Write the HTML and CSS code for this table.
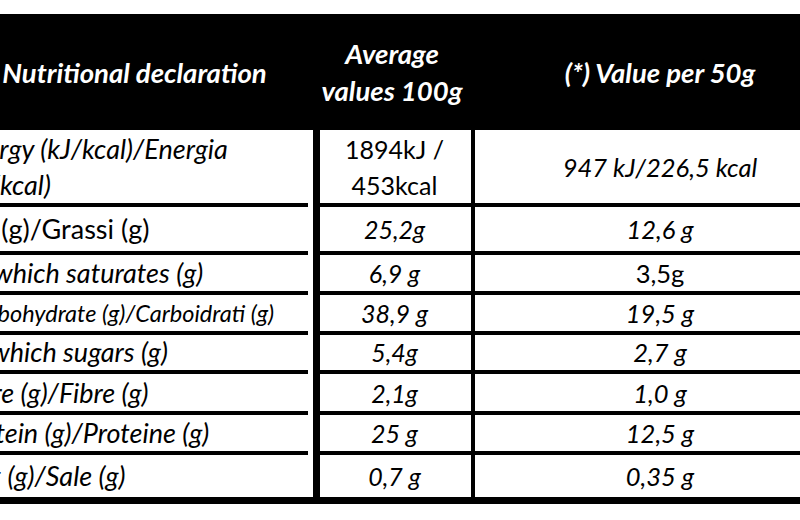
FILE: index.html
```html
<!DOCTYPE html>
<html lang="en">
<head>
<meta charset="utf-8">
<title>Nutritional declaration</title>
<link rel="stylesheet" href="styles.css">
</head>
<body>
<div class="sheet">
  <div class="table">
    <div class="head">
      <div class="hc hc1">Nutritional declaration</div>
      <div class="hc hc2">Average<br>values 100g</div>
      <div class="hc hc3">(*) Value per 50g</div>
    </div>

    <div class="row r1">
      <div class="cell c1 it two">Energy (kJ/kcal)/Energia<br>(kJ/kcal)</div>
      <div class="cell c2 two">1894kJ /<br>453kcal</div>
      <div class="cell c3 it">947 kJ/226,5 kcal</div>
    </div>

    <div class="row r2">
      <div class="cell c1">Fat (g)/Grassi (g)</div>
      <div class="cell c2 it">25,2g</div>
      <div class="cell c3 it">12,6 g</div>
    </div>

    <div class="row r3">
      <div class="cell c1 it sub">of which saturates (g)</div>
      <div class="cell c2 it">6,9 g</div>
      <div class="cell c3">3,5g</div>
    </div>

    <div class="row r4">
      <div class="cell c1 it small">Carbohydrate (g)/Carboidrati (g)</div>
      <div class="cell c2 it">38,9 g</div>
      <div class="cell c3 it">19,5 g</div>
    </div>

    <div class="row r5">
      <div class="cell c1 it sub sub2">of which sugars (g)</div>
      <div class="cell c2 it">5,4g</div>
      <div class="cell c3 it">2,7 g</div>
    </div>

    <div class="row r6">
      <div class="cell c1 it">Fibre (g)/Fibre (g)</div>
      <div class="cell c2 it">2,1g</div>
      <div class="cell c3 it">1,0 g</div>
    </div>

    <div class="row r7">
      <div class="cell c1 it">Protein (g)/Proteine (g)</div>
      <div class="cell c2 it">25 g</div>
      <div class="cell c3 it">12,5 g</div>
    </div>

    <div class="row r8 last">
      <div class="cell c1 it">Salt (g)/Sale (g)</div>
      <div class="cell c2 it">0,7 g</div>
      <div class="cell c3 it">0,35 g</div>
    </div>
  </div>
</div>
</body>
</html>
```

FILE: styles.css
```css
html, body {
  margin: 0;
  padding: 0;
  background: #fff;
  overflow: hidden;
}

body {
  width: 800px;
  height: 520px;
  font-family: "Lato", "Open Sans", "Liberation Sans", sans-serif;
  color: #000;
}

.sheet {
  padding-top: 14px;
}

.table {
  width: 879px;
  margin-left: -44px;
  border-bottom: 7px solid #000;
}

.head,
.row {
  display: grid;
  grid-template-columns: 357px 162px 360px;
}

.head {
  height: 116px;
  background: #000;
  color: #fff;
  font-weight: 700;
  font-style: italic;
  font-size: 27.5px;
}

.hc {
  display: flex;
  align-items: center;
  justify-content: center;
  text-align: center;
}

.hc2 {
  line-height: 37px;
  padding-right: 4px;
}

.hc3 {
  padding-left: 10px;
}

.cell {
  display: flex;
  align-items: center;
  font-size: 25.5px;
  line-height: 36px;
  border-bottom: 4px solid #000;
  white-space: nowrap;
}

.c1 {
  margin-right: 5px;
  padding-left: 2px;
  font-size: 27px;
}

.c2 {
  border-left: 7px solid #000;
  border-right: 4px solid #000;
  justify-content: center;
  text-align: center;
  padding-right: 2px;
  font-size: 25px;
}

.c3 {
  justify-content: center;
  text-align: center;
  padding-left: 10px;
}

.it {
  font-style: italic;
}

.c1.sub {
  padding-left: 9px;
}

.c1.sub2 {
  padding-left: 6px;
}

.c1.small {
  font-size: 23.5px;
  padding-left: 7px;
}

.r1 { height: 77px; }
.r2 { height: 48px; }
.r3 { height: 40px; }
.r4 { height: 39px; }
.r5 { height: 40px; }
.r6 { height: 41px; }
.r7 { height: 40px; }
.r8 { height: 42px; }

.last .cell {
  border-bottom: 0;
}
```
